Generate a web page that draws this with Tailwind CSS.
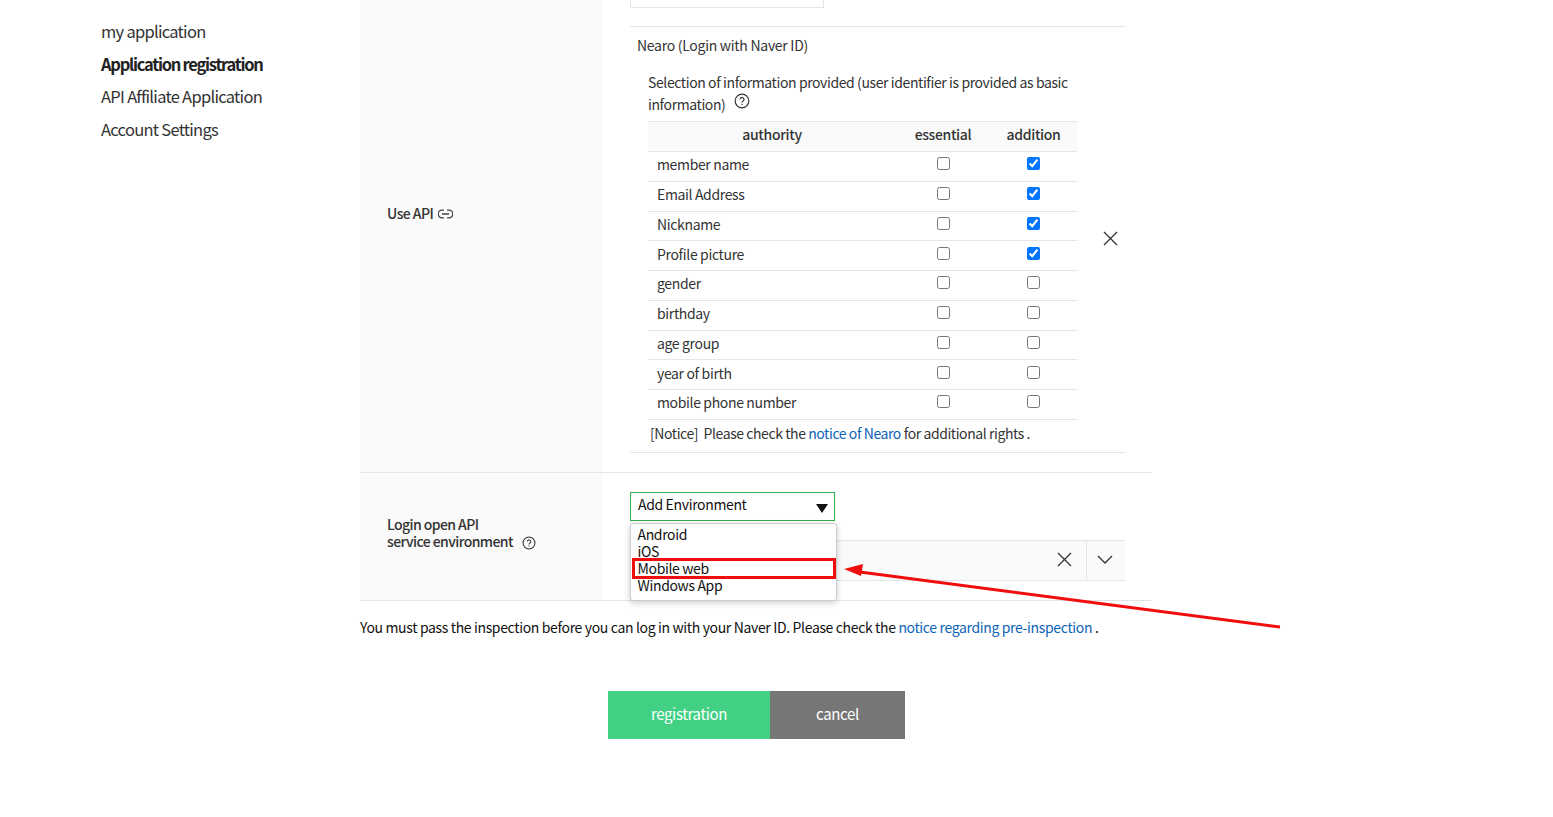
<!DOCTYPE html>
<html lang="en">
<head>
    <meta charset="UTF-8">
    <meta name="viewport" content="width=device-width, initial-scale=1.0">
    <title>Application registration</title>
    <script src="https://cdn.jsdelivr.net/npm/@tailwindcss/browser@4"></script>
</head>
<body class="bg-white overflow-hidden h-[817px] relative font-['Noto_Sans_CJK_KR','Noto_Sans',sans-serif] text-[#333] text-[14px] tracking-[-0.35px]">
    <div class="flex">
        <!-- Sidebar -->
        <nav class="w-[360px] shrink-0 pl-[101px] pt-[15px] text-[16.5px] tracking-[-0.72px] leading-[33px] text-[#333]">
            <div>my application</div>
            <div class="font-bold text-[#222] tracking-[-1.25px] leading-[32px]">Application registration</div>
            <div>API Affiliate Application</div>
            <div>Account Settings</div>
        </nav>

        <main class="w-[792px]">
            <!-- Use API row -->
            <div class="flex h-[473px] border-b border-[#e5e5e5]">
                <div class="w-[243px] bg-[#fafafa] pl-[27px] flex items-center pb-[46px] font-medium text-[#333] tracking-[-0.55px] gap-[5px]">
                    <span>Use API</span>
                    <svg class="w-[15px] h-[10px] mt-[1px]" viewBox="0 0 15 10" fill="none" stroke="#444" stroke-width="1.3">
                        <path d="M6 1.2H4a3.8 3.8 0 0 0 0 7.6h2M9 1.2h2a3.8 3.8 0 0 1 0 7.6H9M4 5h7"/>
                    </svg>
                </div>
                <div class="pl-[27px] w-[522px]">
                    <div class="w-[194px] h-[8px] border border-t-0 border-[#e5e5e5]"></div>
                    <div class="mt-[18px] w-[495px] border-y border-[#e5e5e5] h-[427px]">
                        <div class="pl-[7px] pt-[7px] leading-[22px] tracking-[-0.28px]">Nearo (Login with Naver ID)</div>
                        <div class="flex mt-[15px]">
                            <div class="ml-[18px] w-[429px]">
                                <p class="leading-[22px] tracking-[-0.4px]">Selection of information provided (user identifier is provided as basic information)
                                    <svg class="inline-block w-[16px] h-[16px] ml-[6px] align-[1px]" viewBox="0 0 16 16" fill="none" stroke="#333" stroke-width="1.2">
                                        <circle cx="8" cy="8" r="6.8"/>
                                        <path d="M6 6.4a2 2 0 1 1 3.1 1.7c-.7.4-1.1.8-1.1 1.5M8 10.8v1.2"/>
                                    </svg>
                                </p>
                                <table class="w-full mt-[6px] table-fixed border-collapse">
                                    <thead>
                                        <tr class="h-[30px] bg-[#fafafa] border-y border-[#e5e5e5] font-medium">
                                            <th class="w-[248px] font-medium pb-[5px]">authority</th>
                                            <th class="w-[94px] font-medium pb-[5px]">essential</th>
                                            <th class="font-medium pb-[5px]">addition</th>
                                        </tr>
                                    </thead>
                                    <tbody>
                                        <tr class="h-[29.75px] border-b border-[#e5e5e5]"><td class="pl-[9px] pb-[3px]">member name</td><td class="text-center pb-[3px]"><input type="checkbox"></td><td class="text-center pb-[3px]"><input type="checkbox" checked></td></tr>
                                        <tr class="h-[29.75px] border-b border-[#e5e5e5]"><td class="pl-[9px] pb-[3px]">Email Address</td><td class="text-center pb-[3px]"><input type="checkbox"></td><td class="text-center pb-[3px]"><input type="checkbox" checked></td></tr>
                                        <tr class="h-[29.75px] border-b border-[#e5e5e5]"><td class="pl-[9px] pb-[3px]">Nickname</td><td class="text-center pb-[3px]"><input type="checkbox"></td><td class="text-center pb-[3px]"><input type="checkbox" checked></td></tr>
                                        <tr class="h-[29.75px] border-b border-[#e5e5e5]"><td class="pl-[9px] pb-[3px]">Profile picture</td><td class="text-center pb-[3px]"><input type="checkbox"></td><td class="text-center pb-[3px]"><input type="checkbox" checked></td></tr>
                                        <tr class="h-[29.75px] border-b border-[#e5e5e5]"><td class="pl-[9px] pb-[3px]">gender</td><td class="text-center pb-[3px]"><input type="checkbox"></td><td class="text-center pb-[3px]"><input type="checkbox"></td></tr>
                                        <tr class="h-[29.75px] border-b border-[#e5e5e5]"><td class="pl-[9px] pb-[3px]">birthday</td><td class="text-center pb-[3px]"><input type="checkbox"></td><td class="text-center pb-[3px]"><input type="checkbox"></td></tr>
                                        <tr class="h-[29.75px] border-b border-[#e5e5e5]"><td class="pl-[9px] pb-[3px]">age group</td><td class="text-center pb-[3px]"><input type="checkbox"></td><td class="text-center pb-[3px]"><input type="checkbox"></td></tr>
                                        <tr class="h-[29.75px] border-b border-[#e5e5e5]"><td class="pl-[9px] pb-[3px]">year of birth</td><td class="text-center pb-[3px]"><input type="checkbox"></td><td class="text-center pb-[3px]"><input type="checkbox"></td></tr>
                                        <tr class="h-[29.75px] border-b border-[#e5e5e5]"><td class="pl-[9px] pb-[3px]">mobile phone number</td><td class="text-center pb-[3px]"><input type="checkbox"></td><td class="text-center pb-[3px]"><input type="checkbox"></td></tr>
                                    </tbody>
                                </table>
                                <p class="pl-[2px] mt-[2px] leading-[22px] tracking-[-0.42px]">[Notice] &nbsp;Please check the <a class="text-[#0b63b8]">notice of Nearo</a> for additional rights .</p>
                            </div>
                            <div class="flex-1 flex items-start justify-end pr-[7px] pt-[160px]">
                                <svg class="w-[15px] h-[15px]" viewBox="0 0 15 15" stroke="#333" stroke-width="1.3"><path d="M1 1l13 13M14 1L1 14"/></svg>
                            </div>
                        </div>
                    </div>
                </div>
            </div>

            <!-- Login open API row -->
            <div class="flex h-[128px] border-b border-[#e5e5e5]">
                <div class="w-[243px] bg-[#fafafa] pl-[27px] pt-[43px] leading-[17px] font-medium tracking-[-0.58px]">
                    Login open API<br>
                    <span class="inline-flex items-center gap-[9px]">service environment
                        <svg class="w-[14px] h-[14px] mt-[2px]" viewBox="0 0 16 16" fill="none" stroke="#333" stroke-width="1.2">
                            <circle cx="8" cy="8" r="6.8"/>
                            <path d="M6 6.4a2 2 0 1 1 3.1 1.7c-.7.4-1.1.8-1.1 1.5M8 10.8v1.2"/>
                        </svg>
                    </span>
                </div>
                <div class="pl-[27px] pt-[19px] relative">
                    <div class="w-[205px] h-[29px] border border-[#2eb050] pl-[7px] flex items-center justify-between pr-[6px] text-[#111]">
                        <span class="pb-[4px]">Add Environment</span>
                        <svg class="w-[12px] h-[9px] mt-[3px]" viewBox="0 0 12 9" fill="#111"><path d="M0 0h12L6 9z"/></svg>
                    </div>
                    <div class="w-[495px] h-[41px] mt-[19px] bg-[#fafafa] border-y border-[#e5e5e5] flex justify-end">
                        <div class="w-[40px] flex items-center justify-center pr-[2px] mb-[2px] mr-[1px]">
                            <svg class="w-[15px] h-[15px]" viewBox="0 0 15 15" stroke="#333" stroke-width="1.3"><path d="M1 1l13 13M14 1L1 14"/></svg>
                        </div>
                        <div class="w-[39px] border-l border-[#e5e5e5] flex items-center justify-center pr-[2px]">
                            <svg class="w-[16px] h-[9px] mb-[3px]" viewBox="0 0 16 9" fill="none" stroke="#333" stroke-width="1.3"><path d="M1 1l7 7 7-7"/></svg>
                        </div>
                    </div>
                    <!-- open dropdown -->
                    <ul class="absolute left-[27px] top-[50px] w-[207px] h-[78px] bg-white rounded-[3px] border border-[#ccc] shadow-[0_2px_6px_rgba(0,0,0,0.2)] pl-[6.5px] pt-[2px] leading-[17px] text-[#111]">
                        <li>Android</li>
                        <li>iOS</li>
                        <li>Mobile web</li>
                        <li>Windows App</li>
                    </ul>
                    <div class="absolute left-[29px] top-[85px] w-[204px] h-[21px] border-[3px] border-[#f00d0d]"></div>
                </div>
            </div>

            <p class="mt-[15px] leading-[22px] text-[#111] whitespace-nowrap">You must pass the inspection before you can log in with your Naver ID. Please check the <a class="text-[#0b63b8]">notice regarding pre-inspection</a> .</p>

            <div class="flex mt-[53px] ml-[248px] text-white text-[15px] text-center">
                <div class="w-[162px] h-[48px] leading-[45px] bg-[#41d084]">registration</div>
                <div class="w-[135px] h-[48px] leading-[45px] bg-[#767676]">cancel</div>
            </div>
        </main>
    </div>

    <!-- annotation arrow -->
    <svg class="absolute left-0 top-0 pointer-events-none" width="1553" height="817" viewBox="0 0 1553 817" fill="none">
        <path d="M860 572L1280 627" stroke="#f00d0d" stroke-width="3"/>
        <path d="M844 569l19-5-2 12z" fill="#f00d0d"/>
    </svg>
</body>
</html>
